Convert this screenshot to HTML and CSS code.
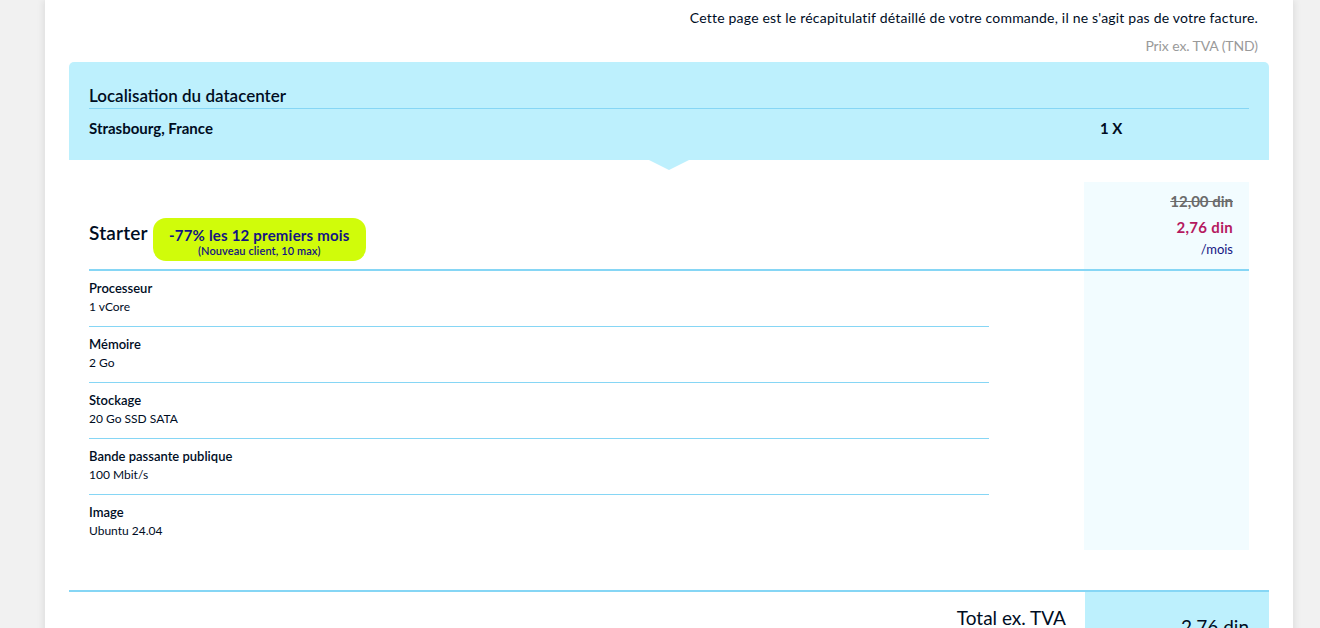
FILE: index.html
```html
<!DOCTYPE html>
<html lang="fr">
<head>
<meta charset="utf-8">
<title>Récapitulatif de commande</title>
<link rel="stylesheet" href="styles.css">
</head>
<body>
<div class="page">
  <main class="card">
    <p class="notice">Cette page est le récapitulatif détaillé de votre commande, il ne s'agit pas de votre facture.</p>
    <p class="currency">Prix ex. TVA (TND)</p>

    <section class="location">
      <h2 class="location-title">Localisation du datacenter</h2>
      <div class="location-row">
        <span class="location-name">Strasbourg, France</span>
        <span class="location-qty">1 X</span>
      </div>
      <span class="location-arrow"></span>
    </section>

    <section class="product">
      <div class="product-head">
        <div class="product-name">
          <h3 class="product-title">Starter</h3>
          <div class="promo">
            <span class="promo-main">-77% les 12 premiers mois</span>
            <span class="promo-sub">(Nouveau client, 10 max)</span>
          </div>
        </div>
        <div class="price-cell">
          <span class="price-old">12,00 din</span>
          <span class="price-new">2,76 din</span>
          <span class="price-period">/mois</span>
        </div>
      </div>
      <div class="product-body">
        <ul class="specs">
          <li class="spec"><span class="spec-label">Processeur</span><span class="spec-value">1 vCore</span></li>
          <li class="spec"><span class="spec-label">Mémoire</span><span class="spec-value">2 Go</span></li>
          <li class="spec"><span class="spec-label">Stockage</span><span class="spec-value">20 Go SSD SATA</span></li>
          <li class="spec"><span class="spec-label">Bande passante publique</span><span class="spec-value">100 Mbit/s</span></li>
          <li class="spec"><span class="spec-label">Image</span><span class="spec-value">Ubuntu 24.04</span></li>
        </ul>
        <div class="price-fill"></div>
      </div>
    </section>

    <section class="total">
      <span class="total-label">Total ex. TVA</span>
      <div class="total-cell"><span class="total-value">2,76 din</span></div>
    </section>
  </main>
</div>
</body>
</html>
```

FILE: styles.css
```css
* { box-sizing: border-box; }

html, body {
  margin: 0;
  padding: 0;
  background: #f1f1f1;
  font-family: "Lato", "Noto Sans", sans-serif;
  color: #000d1f;
  overflow: hidden;
  height: 628px;
}

.page {
  display: flex;
  padding-left: 45px;
}

.card {
  width: 1248px;
  min-height: 700px;
  background: #ffffff;
  padding: 0 24px;
  box-shadow: -3px 0 6px rgba(0, 0, 0, 0.06), 3px 0 6px rgba(0, 0, 0, 0.06);
}

.notice {
  margin: 0;
  padding: 8px 11px 0 0;
  text-align: right;
  font-size: 14px;
  line-height: 20px;
  letter-spacing: 0.2px;
  color: #000d1f;
}

.currency {
  margin: 0;
  padding: 8px 11px 0 0;
  text-align: right;
  font-size: 14px;
  line-height: 20px;
  letter-spacing: -0.1px;
  color: #9a9a9a;
}

.location {
  position: relative;
  margin-top: 6px;
  background: #bdf0fd;
  border-radius: 5px 5px 0 0;
  padding: 22px 20px 21px;
}

.location-title {
  margin: 0;
  font-size: 17px;
  font-weight: 600;
  line-height: 24px;
  border-bottom: 1px solid #86d6f5;
}

.location-row {
  display: grid;
  grid-template-columns: 1fr 149px;
  padding-top: 8px;
  font-size: 15px;
  font-weight: 700;
  line-height: 22px;
}

.location-arrow {
  position: absolute;
  left: 50%;
  bottom: -10px;
  transform: translateX(-50%);
  width: 0;
  height: 0;
  border-left: 20px solid transparent;
  border-right: 20px solid transparent;
  border-top: 10px solid #bdf0fd;
}

.product {
  margin: 22px 20px 0;
}

.product-head {
  display: flex;
  border-bottom: 2px solid #86d6f5;
}

.product-name {
  flex: 1;
  display: flex;
  align-items: flex-start;
  gap: 5px;
  align-self: flex-end;
  padding-bottom: 8px;
}

.product-title {
  margin: 0;
  padding-top: 2px;
  font-size: 19px;
  font-weight: 600;
  line-height: 26px;
  letter-spacing: 0.2px;
}

.promo {
  display: flex;
  flex-direction: column;
  align-items: center;
  background: #d0fc0a;
  color: #141482;
  border-radius: 13px;
  width: 213px;
  height: 43px;
  padding-top: 8px;
}

.promo-main {
  font-size: 15px;
  font-weight: 700;
  line-height: 19px;
  letter-spacing: 0.2px;
}

.promo-sub {
  font-size: 11px;
  font-weight: 600;
  line-height: 11px;
  letter-spacing: 0.1px;
}

.price-cell {
  width: 165px;
  background: #f2fcff;
  display: flex;
  flex-direction: column;
  align-items: flex-end;
  padding: 9px 16px 10px 0;
}

.price-old {
  font-size: 15px;
  font-weight: 700;
  line-height: 20px;
  color: #6b6b6b;
  text-decoration: line-through;
}

.price-new {
  margin-top: 6px;
  font-size: 15px;
  font-weight: 700;
  line-height: 20px;
  color: #b5195f;
  letter-spacing: 0.3px;
}

.price-period {
  margin-top: 2px;
  font-size: 13px;
  line-height: 20px;
  color: #141482;
}

.product-body {
  display: flex;
  justify-content: space-between;
}

.specs {
  list-style: none;
  margin: 0;
  padding: 0;
  width: 900px;
}

.spec {
  display: flex;
  flex-direction: column;
  padding: 8px 0 9px;
  border-bottom: 1px solid #86d6f5;
}

.spec:last-child {
  border-bottom: none;
  padding-bottom: 9px;
}

.spec-label {
  font-size: 13px;
  font-weight: 600;
  line-height: 18px;
}

.spec-value {
  font-size: 12px;
  line-height: 20px;
}

.price-fill {
  width: 165px;
  background: #f2fcff;
}

.total {
  margin-top: 40px;
  border-top: 2px solid #86d6f5;
  display: flex;
  justify-content: flex-end;
}

.total-label {
  font-size: 19px;
  line-height: 26px;
  padding-top: 13px;
  margin-right: 19px;
}

.total-cell {
  width: 184px;
  background: #bdf0fd;
  display: flex;
  justify-content: flex-end;
  padding: 22px 20px 20px 0;
}

.total-value {
  font-size: 19px;
  line-height: 26px;
}
```
